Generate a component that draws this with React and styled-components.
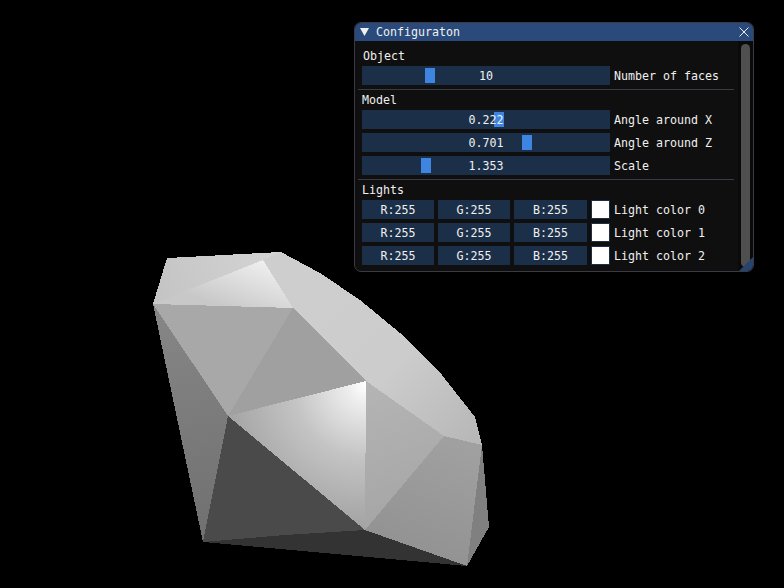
import React from "react";
import styled, { createGlobalStyle } from "styled-components";

const Global = createGlobalStyle`
  html, body { margin: 0; padding: 0; background: #000; }
  #root { width: 784px; height: 588px; overflow: hidden; position: relative; }
`;

const Scene = styled.svg`
  display: block;
  width: 784px;
  height: 588px;
`;

const Win = styled.section`
  position: absolute;
  left: 354px;
  top: 22px;
  width: 400px;
  height: 250px;
  box-sizing: border-box;
  border: 1px solid #3a3a44;
  border-radius: 7px;
  background: #0f0f0f;
  overflow: hidden;
  display: flex;
  flex-direction: column;
  color: #f0f0f0;
  font-family: "DejaVu Sans Mono", "Liberation Mono", monospace;
  font-size: 11.63px;
  line-height: 13px;
  white-space: pre;
`;

const TitleBar = styled.header`
  height: 18px;
  flex: none;
  background: #294a7a;
  display: flex;
  align-items: center;
  padding: 0 4px 0 5px;
  gap: 7px;
`;

const TitleText = styled.span`
  flex: 1;
`;

const Body = styled.div`
  flex: 1;
  display: flex;
  min-height: 0;
`;

const Content = styled.div`
  flex: 1;
  padding: 9px 4px 0 7px;
  display: flex;
  flex-direction: column;
`;

const Label = styled.div`
  height: 13px;
  margin-bottom: 3px;
  margin-left: ${(p) => p.$nudge || 0}px;
`;

const Rows = styled.div`
  display: flex;
  flex-direction: column;
  gap: 4px;
`;

const Row = styled.div`
  display: flex;
  align-items: flex-start;
  gap: 4px;
  height: 19px;
  line-height: 21px;
`;

const Slider = styled.div`
  position: relative;
  width: 248px;
  height: 19px;
  background: #1c2f48;
  text-align: center;
`;

const Grab = styled.i`
  position: absolute;
  top: 2px;
  width: 10px;
  height: 15px;
  background: #3d85e0;
`;

const SliderValue = styled.span`
  position: relative;
`;

const ChannelButton = styled.div`
  width: ${(p) => p.$w}px;
  height: 19px;
  background: #1c2f48;
  text-align: center;
`;

const Swatch = styled.div`
  width: 19px;
  height: 19px;
  box-sizing: border-box;
  background: #fff;
  border: 1px solid #1c2f48;
`;

const Separator = styled.hr`
  border: 0;
  height: 1px;
  background: #3a3a44;
  margin: 4px 0 4px -4px;
`;

const ScrollTrack = styled.div`
  width: 15px;
  flex: none;
  background: #0a0a0a;
  padding: 3px 3px 4px;
  box-sizing: border-box;
  display: flex;
`;

const ScrollThumb = styled.div`
  flex: 1;
  background: #4f4f4f;
  border-radius: 5px;
`;

const ResizeGrip = styled.div`
  position: absolute;
  right: 0;
  bottom: 0;
  width: 14px;
  height: 14px;
  background: #27456c;
  clip-path: polygon(100% 0, 100% 100%, 0 100%);
`;

const sliders = {
  object: [{ value: "10", left: 63, label: "Number of faces" }],
  model: [
    { value: "0.222", left: 132, label: "Angle around X" },
    { value: "0.701", left: 160, label: "Angle around Z" },
    { value: "1.353", left: 59, label: "Scale" },
  ],
};

const SliderRow = ({ value, left, label }) => (
  <Row>
    <Slider>
      <Grab style={{ left }} />
      <SliderValue>{value}</SliderValue>
    </Slider>
    <span>{label}</span>
  </Row>
);

const LightRow = ({ index }) => (
  <Row>
    <ChannelButton $w={72}>R:255</ChannelButton>
    <ChannelButton $w={72}>G:255</ChannelButton>
    <ChannelButton $w={73}>B:255</ChannelButton>
    <Swatch />
    <span>Light color {index}</span>
  </Row>
);

const Diamond = () => (
  <Scene viewBox="0 0 784 588">
    <defs>
      <linearGradient id="gTopL" gradientUnits="userSpaceOnUse" x1="160" y1="300" x2="275" y2="255">
        <stop offset="0" stopColor="#c4c4c4" />
        <stop offset="1" stopColor="#d4d4d4" />
      </linearGradient>
      <linearGradient id="gTop" gradientUnits="userSpaceOnUse" x1="230" y1="310" x2="250" y2="255">
        <stop offset="0" stopColor="#c8c8c8" />
        <stop offset="0.45" stopColor="#dadada" />
        <stop offset="1" stopColor="#f0f0f0" />
      </linearGradient>
      <linearGradient id="gSide" gradientUnits="userSpaceOnUse" x1="300" y1="280" x2="470" y2="440">
        <stop offset="0" stopColor="#cecece" />
        <stop offset="0.55" stopColor="#cccccc" />
        <stop offset="1" stopColor="#b8b8b8" />
      </linearGradient>
      <radialGradient id="gBright" gradientUnits="userSpaceOnUse" cx="366" cy="385" r="145">
        <stop offset="0" stopColor="#ffffff" />
        <stop offset="0.12" stopColor="#eeeeee" />
        <stop offset="0.5" stopColor="#c4c4c4" />
        <stop offset="1" stopColor="#a2a2a2" />
      </radialGradient>
      <linearGradient id="gLeft" gradientUnits="userSpaceOnUse" x1="160" y1="310" x2="205" y2="540">
        <stop offset="0" stopColor="#868686" />
        <stop offset="1" stopColor="#707070" />
      </linearGradient>
      <linearGradient id="gMid" gradientUnits="userSpaceOnUse" x1="370" y1="390" x2="420" y2="550">
        <stop offset="0" stopColor="#b4b4b4" />
        <stop offset="1" stopColor="#a2a2a2" />
      </linearGradient>
      <linearGradient id="gLow" gradientUnits="userSpaceOnUse" x1="440" y1="440" x2="400" y2="550">
        <stop offset="0" stopColor="#a0a0a0" />
        <stop offset="1" stopColor="#929292" />
      </linearGradient>
    </defs>
    <g shapeRendering="crispEdges">
      <polygon fill="url(#gSide)" points="281,252 320,273 360,300 400,333 438,370 475,417 482,445 444,436 366,381 293,308 263,260" />
      <polygon fill="url(#gTopL)" points="167,258 281,252 263,260 153,304" />
      <polygon fill="url(#gTop)" points="153,304 263,260 293,308" />
      <polygon fill="#a8a8a8" points="153,304 293,308 228,416" />
      <polygon fill="#a0a0a0" points="293,308 366,381 228,416" />
      <polygon fill="url(#gBright)" points="228,416 366,381 365,530" />
      <polygon fill="url(#gMid)" points="366,381 444,436 365,530" />
      <polygon fill="url(#gLow)" points="444,436 482,445 467,566 365,530" />
      <polygon fill="#808080" points="482,445 489,527 467,566" />
      <polygon fill="url(#gLeft)" points="153,304 228,416 203,542" />
      <polygon fill="#4a4a4a" points="228,416 365,530 203,542" />
      <polygon fill="#333333" points="203,542 285,535 365,530 467,566" />
    </g>
  </Scene>
);

export default function App() {
  return (
    <>
      <Global />
      <Diamond />
      <Win>
        <TitleBar>
          <svg width="9" height="8" viewBox="0 0 9 8">
            <polygon points="0,0 9,0 4.5,8" fill="#f0f0f0" />
          </svg>
          <TitleText>Configuraton</TitleText>
          <svg width="10" height="10" viewBox="0 0 10 10">
            <path d="M0.5 0.5 L9.5 9.5 M9.5 0.5 L0.5 9.5" stroke="#f0f0f0" strokeWidth="1" fill="none" />
          </svg>
        </TitleBar>
        <Body>
          <Content>
            <Label $nudge={1}>Object</Label>
            <Rows>
              {sliders.object.map((s) => (
                <SliderRow key={s.label} {...s} />
              ))}
            </Rows>
            <Separator />
            <Label>Model</Label>
            <Rows>
              {sliders.model.map((s) => (
                <SliderRow key={s.label} {...s} />
              ))}
            </Rows>
            <Separator />
            <Label>Lights</Label>
            <Rows>
              {[0, 1, 2].map((i) => (
                <LightRow key={i} index={i} />
              ))}
            </Rows>
          </Content>
          <ScrollTrack>
            <ScrollThumb />
          </ScrollTrack>
        </Body>
        <ResizeGrip />
      </Win>
    </>
  );
}
